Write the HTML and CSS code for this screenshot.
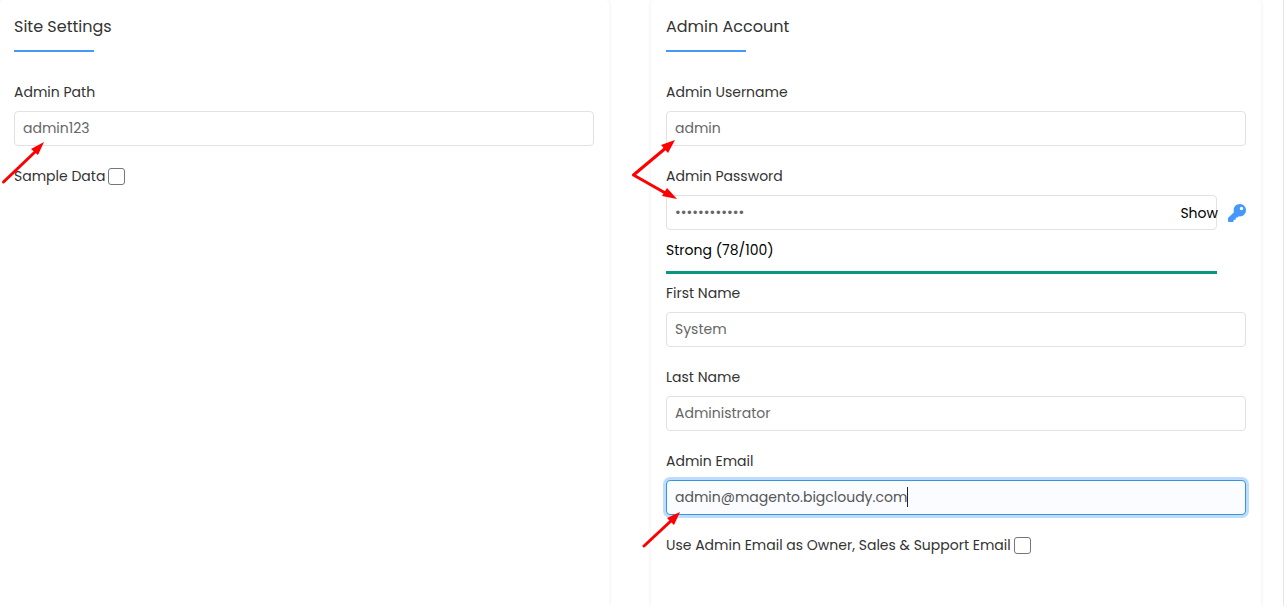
FILE: index.html
```html
<!DOCTYPE html>
<html lang="en">
<head>
<meta charset="utf-8">
<title>Site Settings</title>
<link rel="stylesheet" href="styles.css">
</head>
<body>
<form class="page">
  <section class="card">
    <h2 class="title">Site Settings</h2>
    <div class="field">
      <label for="path">Admin Path</label>
      <input class="text" id="path" type="text" value="admin123">
    </div>
    <div class="check">
      <label for="sample">Sample Data</label>
      <input class="box" id="sample" type="checkbox">
    </div>
    <svg class="arrows arrows-site" width="60" height="60" viewBox="0 140 60 60" aria-hidden="true">
      <path class="shaft" d="M3.500 182L36 151"/>
      <path class="head" d="M44 142L31 149L38 155Z"/>
    </svg>
  </section>
  <section class="card">
    <h2 class="title">Admin Account</h2>
    <div class="field">
      <label for="user">Admin Username</label>
      <input class="text" id="user" type="text" value="admin">
    </div>
    <div class="password">
      <label for="pass">Admin Password</label>
      <div class="password-row">
        <input class="text" id="pass" type="password" value="abcdefghijkl">
        <button class="show" type="button">Show</button>
        <button class="key" type="button" aria-label="Generate password">
          <svg viewBox="0 0 512 512" width="18" height="18"><path d="M512 176.001C512 273.203 433.202 352 336 352c-11.220 0-22.190-1.062-32.827-3.069l-24.012 27.014A23.999 23.999 0 0 1 261.223 384H224v40c0 13.255-10.745 24-24 24h-40v40c0 13.255-10.745 24-24 24H24c-13.255 0-24-10.745-24-24v-78.059c0-6.365 2.529-12.470 7.029-16.971l161.802-161.802C163.108 213.814 160 195.271 160 176 160 78.798 238.797.001 335.999 0 433.488-.001 512 78.511 512 176.001zM336 128c0 26.510 21.490 48 48 48s48-21.490 48-48-21.490-48-48-48-48 21.490-48 48z"/></svg>
        </button>
      </div>
      <div class="strength">Strong (78/100)</div>
    </div>
    <div class="field">
      <label for="first">First Name</label>
      <input class="text" id="first" type="text" value="System">
    </div>
    <div class="field">
      <label for="last">Last Name</label>
      <input class="text" id="last" type="text" value="Administrator">
    </div>
    <div class="field">
      <label for="email">Admin Email</label>
      <div class="active">
        <input class="text text-active" id="email" type="email" value="admin@magento.bigcloudy.com">
        <span class="caret"></span>
      </div>
    </div>
    <div class="check">
      <label for="owner">Use Admin Email as Owner, Sales &amp; Support Email</label>
      <input class="box" id="owner" type="checkbox">
    </div>
    <svg class="arrows arrows-account" width="60" height="420" viewBox="631 135 60 420" aria-hidden="true">
      <path class="shaft" d="M667 147L633.500 175L667 194M644 546L673 519"/>
      <path class="head" d="M675 140L661 145L668 153ZM677 199L667 188L662 196ZM680 512L667 518L674 525Z"/>
    </svg>
  </section>
</form>
</body>
</html>
```
FILE: styles.css
```css
* {
  box-sizing: border-box;
}

body {
  margin: 0;
  background: #fff;
  color: #333;
  font: 14px/21px Poppins, Inter, sans-serif;
}

.page {
  display: grid;
  grid-template-columns: 609fr 610fr;
  gap: 42px;
  min-height: 100vh;
  padding-right: 22px;
  border-right: 1px solid #e8e8e8;
}

.card {
  position: relative;
  padding: 15px 15px 30px;
  border-radius: 4px 4px 0 0;
  background: #fff;
  box-shadow: 0 0 5px rgba(0, 0, 0, 0.08);
}

.card:first-child {
  padding-left: 14px;
}

.title {
  margin: 0 0 30px;
  font-size: 16px;
  font-weight: 400;
  line-height: 24px;
}

.title::after {
  content: "";
  display: block;
  width: 80px;
  height: 2px;
  margin-top: 11px;
  background: #4398fa;
}

.field,
.password {
  display: grid;
  gap: 8px;
  margin-bottom: 20px;
}

.text {
  width: 100%;
  min-width: 0;
  height: 35px;
  padding: 0 8px;
  border: 1px solid #e2e2e2;
  border-radius: 4px;
  background: #fff;
  color: #666;
  font: inherit;
  outline: 0;
}

.password {
  margin-bottom: 9px;
}

.password-row {
  position: relative;
  display: flex;
  align-items: center;
  gap: 11px;
}

.show,
.key {
  padding: 0;
  border: 0;
  background: none;
  font: inherit;
}

.show {
  position: absolute;
  top: 8px;
  right: 28px;
  color: #000;
}

.key {
  flex: none;
  display: flex;
  color: #4398fa;
}

.key path {
  fill: currentColor;
}

.strength {
  margin-right: 29px;
  padding: 2px 0 10px;
  border-bottom: 3px solid #0b9682;
  color: #000;
}

.active {
  position: relative;
}

.text-active {
  display: block;
  border-color: #3297db;
  background: #fafcff;
  box-shadow: 0 0 0 3px #bfdcff;
  color: #555;
}

.caret {
  position: absolute;
  top: 7px;
  left: 241px;
  width: 1px;
  height: 20px;
  background: #222;
}

.check {
  display: flex;
  align-items: center;
  gap: 3px;
}

.box {
  appearance: none;
  width: 17px;
  height: 17px;
  margin: 0;
  border: 1px solid #767676;
  border-radius: 3px;
  background: #fff;
}

.arrows {
  position: absolute;
  pointer-events: none;
}

.arrows-site {
  top: 140px;
  left: 0;
}

.arrows-account {
  top: 135px;
  left: -20px;
}

.shaft {
  fill: none;
  stroke: #f00;
  stroke-width: 3;
  stroke-linecap: round;
  stroke-linejoin: round;
}

.head {
  fill: #f00;
}
```
